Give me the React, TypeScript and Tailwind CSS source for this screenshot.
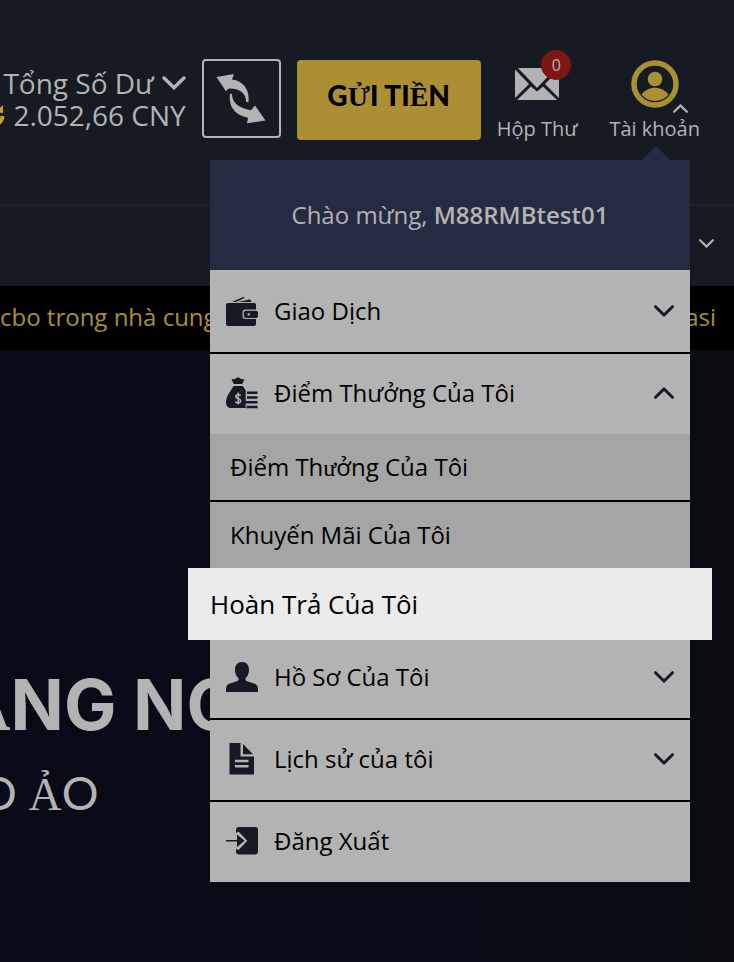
import React from "react";

const serif = "font-['Liberation_Serif',serif]";

function Chevron({ up = false, className }: { up?: boolean; className: string }) {
  return (
    <svg viewBox="0 0 20 12" className={className} fill="none" stroke="currentColor" strokeLinecap="round" aria-hidden="true">
      <path d={up ? "M1.5 10.3 10 2l8.5 8.3" : "M1.5 1.7 10 10l8.5-8.3"} strokeWidth="3" />
    </svg>
  );
}

function WalletIcon() {
  return (
    <svg viewBox="0 0 32 32" className="size-8" fill="currentColor" aria-hidden="true">
      <path d="M6 7 16.500 2.200q1.500-.6 2 .8L10 7zM12.500 7 23 4.500q1.500-.2 1.800 1l.5 1.500z" />
      <path d="M2 8h26a2 2 0 0 1 2 2v4.500H19.500a3 3 0 0 0-3 3v3.500a3 3 0 0 0 3 3H30v5a2 2 0 0 1-2 2H2a2 2 0 0 1-2-2V10a2 2 0 0 1 2-2z" />
      <path d="M20 15.700h10a2 2 0 0 1 2 2V21a2 2 0 0 1-2 2H20a2.200 2.200 0 0 1-2.200-2.200v-3a2.200 2.200 0 0 1 2.200-2.100zm1.600 2.500v2.200h2.200v-2.200z" fillRule="evenodd" />
    </svg>
  );
}

function MoneyBagIcon() {
  return (
    <svg viewBox="0 0 32 32" className="size-8" fill="currentColor" aria-hidden="true">
      <path d="M5.500 2.200 9 2l3-2 3 2 3.500.2L16.200 7H7.800z" />
      <path d="M7.500 9h9.200c1 1.500 2.300 2.900 3 4.500V31H5C2 31 0 28.800 0 25.500 0 19 4.500 14.500 7.500 9z" />
      <path d="M21 14.500h10.500v2.600H21zM21 19.200h10.500v2.600H21zM19 24h12.500v2.600H19zM20.500 28.700h11v2.600h-11z" />
      <path d="M14.700 18.700c-.6-1.200-5-1.500-5 .9 0 2.700 5 1.700 5 4.300 0 2.400-4.500 2.300-5.300.7M12.200 15.500v12" fill="none" stroke="#b3b3b3" strokeWidth="1.500" />
    </svg>
  );
}

function PersonIcon() {
  return (
    <svg viewBox="0 0 32 32" className="size-8" fill="currentColor" aria-hidden="true">
      <path d="M16 1c4.300 0 7 3 7 7.700 0 3.800-1.500 7-3.600 8.600v.9c0 1.300 1 1.800 2.300 2.200l6.300 2c2.700.9 4 2.600 4 5.600v3H0v-3c0-3 1.300-4.700 4-5.600l6.300-2c1.300-.4 2.300-.9 2.300-2.200v-.9C10.500 15.700 9 12.500 9 8.700 9 4 11.700 1 16 1z" />
    </svg>
  );
}

function DocumentIcon() {
  return (
    <svg viewBox="0 0 32 32" className="size-8" fill="currentColor" aria-hidden="true">
      <path d="M3.500 0h11v13.500H28V31.500H3.500zM9 16.700v2.500h13.500v-2.500zM9 22v2.500h13.500V22z" fillRule="evenodd" />
      <path d="M17 1l10 10.300H17z" />
    </svg>
  );
}

function LogoutIcon() {
  return (
    <svg viewBox="0 0 32 32" className="size-8" fill="currentColor" aria-hidden="true">
      <path d="M13 2h16a3 3 0 0 1 3 3v21.500a3 3 0 0 1-3 3H13a3 3 0 0 1-3-3V24l2.500 1 8.800-9.200L12.500 6.500 10 8V5a3 3 0 0 1 3-3z" />
      <path d="M0 15h11V9.500l7.500 6.300-7.500 6.300v-5.500H0z" />
    </svg>
  );
}

function MenuRow({ icon, label, open, chevron = true, className }: {
  icon: React.ReactNode;
  label: string;
  open?: boolean;
  chevron?: boolean;
  className: string;
}) {
  return (
    <button type="button" aria-expanded={chevron ? !!open : undefined} className={`flex w-full items-center bg-[#b3b3b3] px-4 text-left ${className}`}>
      <span className="mr-4 text-[#161a22]">{icon}</span>
      <span className="grow text-2xl text-black">{label}</span>
      {chevron && <Chevron up={open} className="h-3 w-5 text-[#161a22]" />}
    </button>
  );
}

function AccountMenu() {
  return (
    <nav aria-label="Tài khoản" className="absolute top-40 right-11 z-10 w-[480px]">
      <svg viewBox="0 0 28 14" className="absolute -top-3.5 right-5 h-3.5 w-7" fill="#252c42" aria-hidden="true">
        <path d="M0 14 14 0l14 14z" />
      </svg>
      <p className="flex h-[110px] items-center justify-center bg-[#252c42] text-2xl whitespace-pre text-[#b3b3b3]">
        Chào mừng, <strong className="font-semibold">M88RMBtest01</strong>
      </p>
      <ul>
        <li className="border-b-2 border-black">
          <MenuRow icon={<WalletIcon />} label="Giao Dịch" className="h-[82px]" />
        </li>
        <li>
          <MenuRow icon={<MoneyBagIcon />} label="Điểm Thưởng Của Tôi" open className="h-20 pb-0.5" />
          <ul className="text-2xl text-black">
            <li className="border-b-2 border-black">
              <a href="#rewards" className="flex h-[66px] items-center bg-[#a5a5a5] px-5">
                <span>Điểm Th<span className={serif}>ư</span>ởng Của Tôi</span>
              </a>
            </li>
            <li>
              <a href="#promotions" className="flex h-[66px] items-center bg-[#a5a5a5] px-5">Khuyến Mãi Của Tôi</a>
            </li>
            <li className="relative -mx-[22px] -mb-1">
              <a href="#rebates" className="flex h-[72px] items-center bg-[#ebebeb] px-[22px] text-[26px] font-medium">Hoàn Trả Của Tôi</a>
            </li>
          </ul>
        </li>
        <li className="border-b-2 border-black">
          <MenuRow icon={<PersonIcon />} label="Hồ Sơ Của Tôi" className="h-[82px]" />
        </li>
        <li className="border-b-2 border-black">
          <MenuRow icon={<DocumentIcon />} label="Lịch sử của tôi" className="h-20 pb-0.5" />
        </li>
        <li>
          <MenuRow icon={<LogoutIcon />} label="Đăng Xuất" chevron={false} className="h-20 pb-0.5" />
        </li>
      </ul>
    </nav>
  );
}

export default function App() {
  return (
    <div className="relative flex min-h-screen flex-col overflow-hidden bg-[#161a22] font-['Open_Sans',sans-serif] text-[#b3b3b3]">
      <header className="flex h-[206px] items-start justify-end gap-4 border-b-2 border-[#1b2331] pr-[34px] whitespace-nowrap *:shrink-0">
        <button type="button" className="mt-[67px] flex flex-col items-end text-[28px] leading-8">
          <span className="flex items-center gap-2">
            Tổng Số Dư
            <Chevron className="h-3.5 w-6" />
          </span>
          <span className="flex items-center gap-2 font-medium">
            <svg viewBox="0 0 24 24" className="size-6 text-[#c4a030]" fill="none" stroke="currentColor" strokeWidth="4" aria-hidden="true">
              <path d="M21.500 13a9.500 9.500 0 1 1-5-9" />
              <path d="M14 9.500 22 2v8z" fill="currentColor" stroke="none" />
            </svg>
            2.052,66 CNY
          </span>
        </button>
        <button type="button" aria-label="Chuyển tiền" className="mt-[59px] flex size-[79px] items-center justify-center rounded-sm border-2 border-[#b3b3b3]">
          <svg viewBox="0 0 50 50" className="size-[50px]" fill="currentColor" aria-hidden="true">
            <path d="M.5 3 18 0l-2 5.500C27 7 34 15 32.500 28.500l-2.500-.8c.5-7.500-6-13.500-17-13.200L9.800 17z" />
            <path d="M49.500 46.500 31 49.300l1-5.500C20 41 12 34 14 19.500l2 .5c0 9 7 14 19 16.200l4-4.700z" />
          </svg>
        </button>
        <button type="button" className="mt-[60px] h-20 w-[184px] rounded bg-[#ac8f32] pb-2 font-['Lato',sans-serif] text-[28px] font-black text-black">
          G<span className={serif}>Ử</span>I TI<span className={serif}>Ề</span>N
        </button>
        <a href="#inbox" className="relative mt-[60px] flex flex-col items-center text-xl leading-[26px]">
          <svg viewBox="0 0 44 32" className="mt-2 mb-4 h-8 w-11" fill="currentColor" aria-hidden="true">
            <path d="M3 0h38L22 20z" />
            <path d="M0 1.500 14 16 0 30zM44 1.500V30L30 16z" />
            <path d="m16 18.500 6 5 6-5L42 32H2z" />
          </svg>
          Hộp Thư
          <span className="absolute -top-2.5 right-1.5 flex size-[30px] items-center justify-center rounded-full bg-[#7d1713] text-base">0</span>
        </a>
        <button type="button" className="relative mt-[60px] ml-4 flex flex-col items-center text-xl leading-[26px]">
          <svg viewBox="0 0 48 48" className="mb-2 size-12 text-[#ac8f32]" fill="currentColor" aria-hidden="true">
            <circle cx="24" cy="24" r="21" fill="none" stroke="currentColor" strokeWidth="5.500" />
            <circle cx="24" cy="19" r="7.300" />
            <path d="M10.500 34.500C17 25.500 31 25.500 37.500 34.500 31 43 17 43 10.500 34.500z" />
          </svg>
          Tài khoản
          <Chevron up className="absolute top-11 right-3 h-[9px] w-[15px]" />
        </button>
      </header>
      <div className="flex h-20 items-center justify-end pr-5">
        <button type="button" aria-label="Thêm" className="pb-1.5">
          <Chevron className="h-[9px] w-[15px]" />
        </button>
      </div>
      <div className="flex h-16 items-center justify-between overflow-hidden bg-black pr-[18px] pb-0.5 text-2xl text-[#ac8f32]">
        <span>cbo trong nhà cung</span>
        <span>asi</span>
      </div>
      <main className="grow bg-linear-to-r from-[#080a17] from-60% via-[#080b14] via-90% to-[#0a0b0f] pt-[320px] font-['Inter',sans-serif] whitespace-nowrap">
        <h1 className="-ml-10 text-[70px] leading-[70px] font-bold">
          <span className={serif}>Ă</span>NG NG
        </h1>
        <p className="-ml-5 pt-6 font-['Lato',sans-serif] text-[46px] leading-[54px]">
          O <span className={serif}>Ả</span>O
        </p>
      </main>
      <AccountMenu />
    </div>
  );
}
